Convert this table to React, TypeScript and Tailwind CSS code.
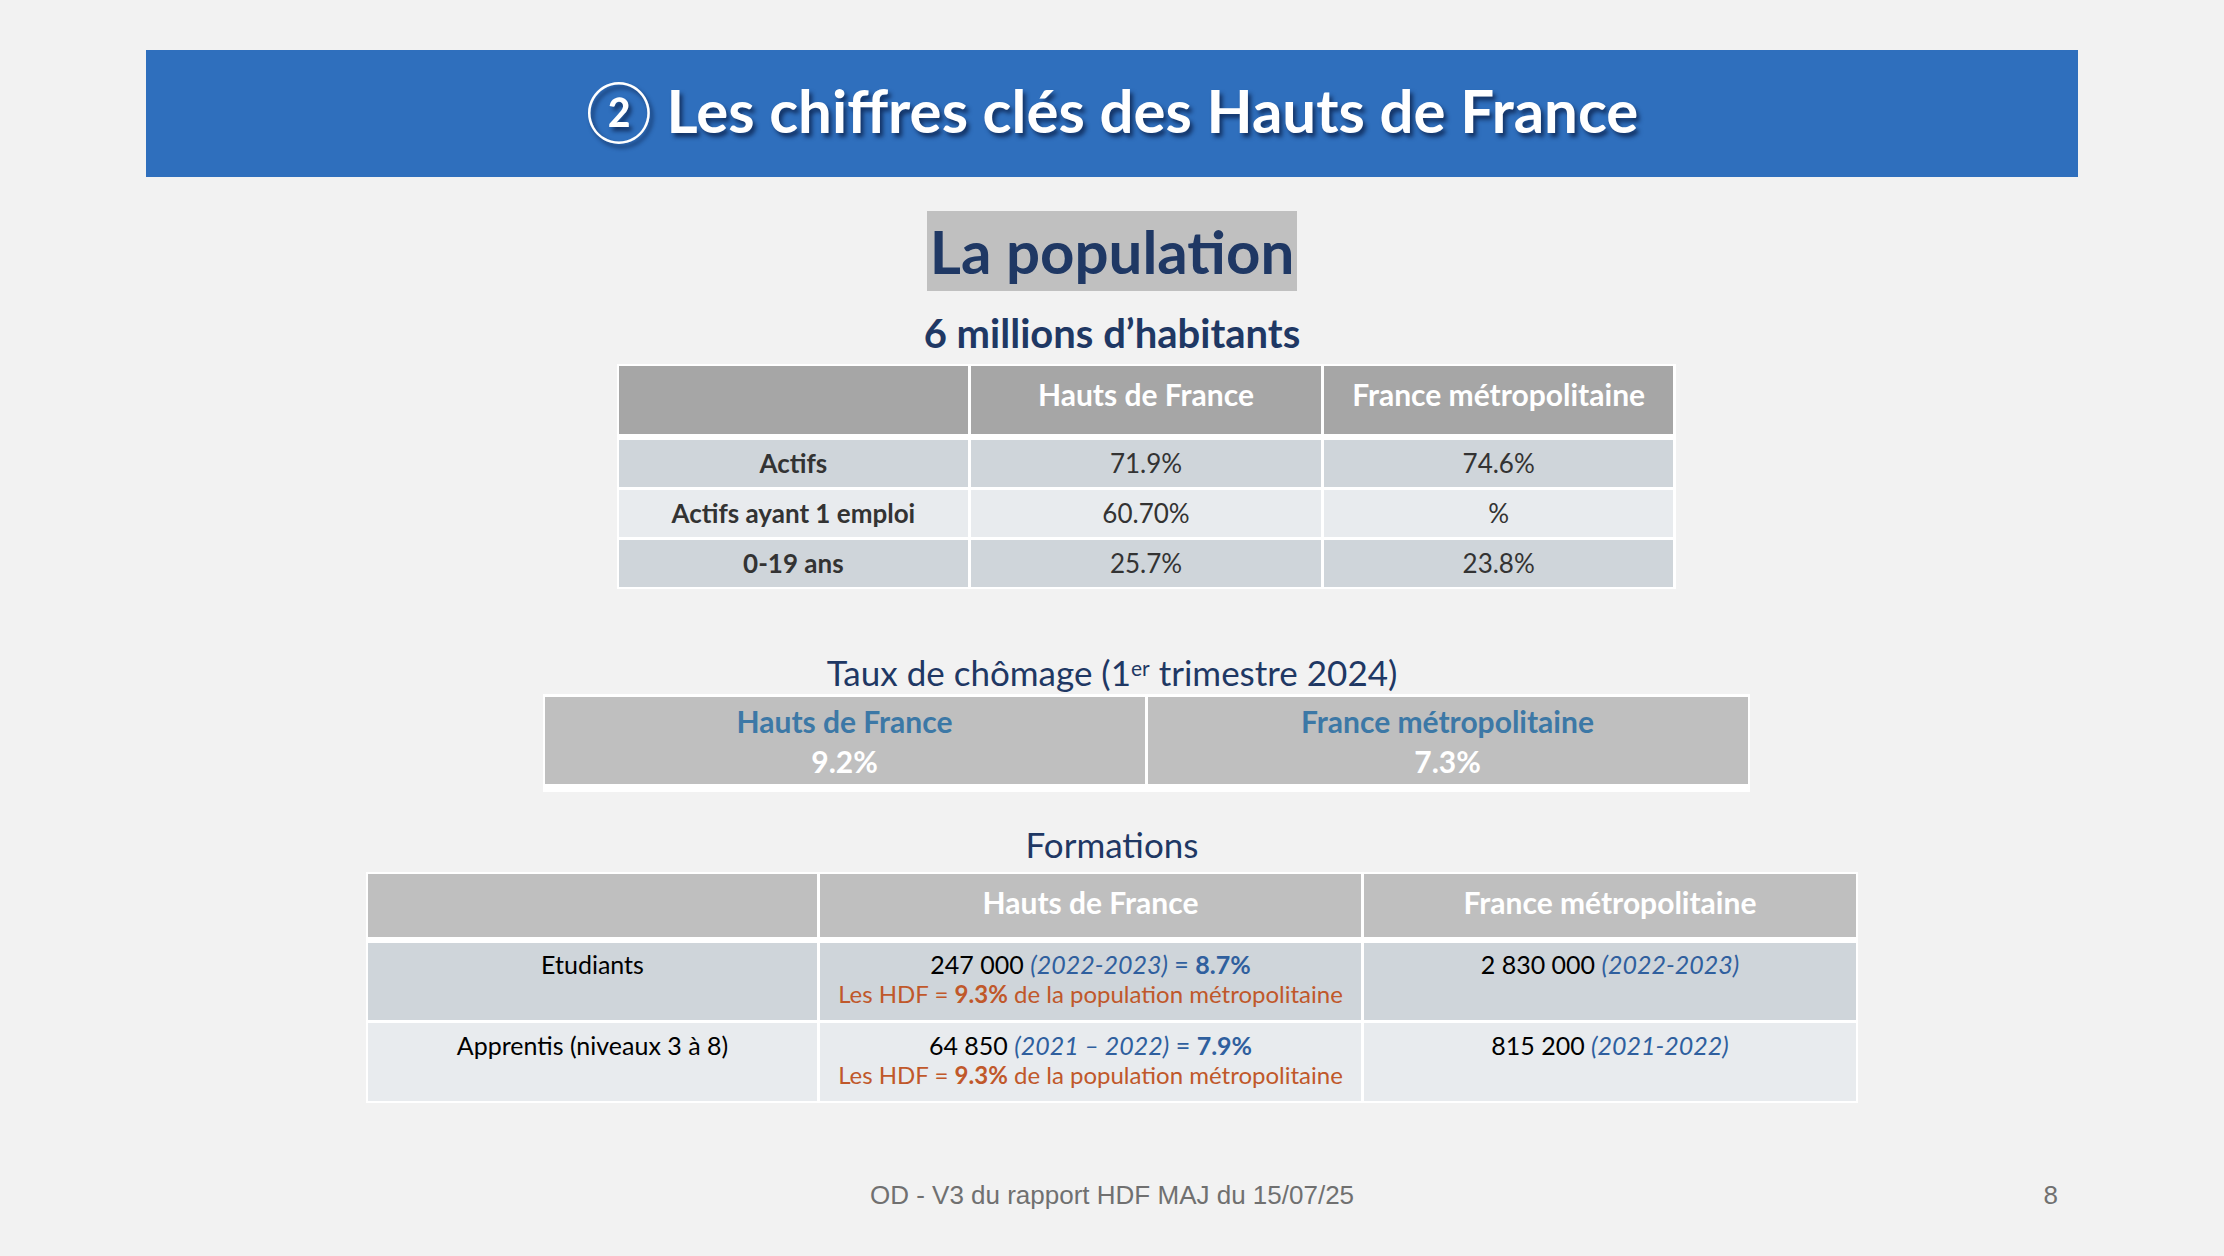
const font = { fontFamily: "Lato, 'Open Sans', sans-serif" }

const populationRows = [
  { label: "Actifs", hdf: "71.9%", fr: "74.6%" },
  { label: "Actifs ayant 1 emploi", hdf: "60.70%", fr: "%" },
  { label: "0-19 ans", hdf: "25.7%", fr: "23.8%" },
]

function PopulationTable() {
  return (
    <div className="w-[1059px] bg-white p-[2px] flex flex-col gap-[3px] text-[26px]">
      <div className="grid grid-cols-3 gap-[3px] h-[68px] mb-[3px] text-[30px]">
        <div className="bg-[#a6a6a6]" />
        <div className="bg-[#a6a6a6] text-white font-bold text-center pt-[6px]">Hauts de France</div>
        <div className="bg-[#a6a6a6] text-white font-bold text-center pt-[6px]">France métropolitaine</div>
      </div>
      {populationRows.map((row, i) => {
        const bg = i % 2 === 1 ? "bg-[#e8ebee]" : "bg-[#cfd5da]"
        return (
          <div key={row.label} className="grid grid-cols-3 gap-[3px] h-[47px] text-[#333333]">
            <div className={`${bg} flex items-center justify-center font-bold`}>{row.label}</div>
            <div className={`${bg} flex items-center justify-center`}>{row.hdf}</div>
            <div className={`${bg} flex items-center justify-center`}>{row.fr}</div>
          </div>
        )
      })}
    </div>
  )
}

function ChomageTable() {
  return (
    <div className="w-[1207px] bg-white px-[2px] pt-[3px] pb-[8px] text-[30px] font-bold">
      <div className="grid grid-cols-2 gap-[3px] h-[87px]">
        <div className="bg-[#bfbfbf] flex flex-col items-center justify-center leading-[40px]">
          <span className="text-[#3c78a6]">Hauts de France</span>
          <span className="text-white">9.2%</span>
        </div>
        <div className="bg-[#bfbfbf] flex flex-col items-center justify-center leading-[40px]">
          <span className="text-[#3c78a6]">France métropolitaine</span>
          <span className="text-white">7.3%</span>
        </div>
      </div>
    </div>
  )
}

function HdfNote() {
  return (
    <div className="text-[#c0582a] text-[24px]">
      Les HDF = <span className="font-bold">9.3%</span> de la population métropolitaine
    </div>
  )
}

function FormationsTable() {
  return (
    <div className="w-[1492px] bg-white p-[2px] flex flex-col gap-[3px] text-[25px] text-black">
      <div className="grid grid-cols-[449px_541px_1fr] gap-[3px] h-[63px] mb-[3px] text-[30px]">
        <div className="bg-[#bfbfbf]" />
        <div className="bg-[#bfbfbf] text-white font-bold text-center pt-[6px]">Hauts de France</div>
        <div className="bg-[#bfbfbf] text-white font-bold text-center pt-[6px]">France métropolitaine</div>
      </div>
      <div className="grid grid-cols-[449px_541px_1fr] gap-[3px] h-[77px] leading-[29px]">
        <div className="bg-[#cfd5da] text-center pt-[7px]">Etudiants</div>
        <div className="bg-[#cfd5da] text-center pt-[7px]">
          <div>
            247 000 <span className="italic text-[#2f5f9e]">(2022-2023)</span>{" "}
            <span className="text-[#2f5f9e]">=</span> <span className="font-bold text-[#2f5f9e]">8.7%</span>
          </div>
          <HdfNote />
        </div>
        <div className="bg-[#cfd5da] text-center pt-[7px]">
          2 830 000 <span className="italic text-[#2f5f9e]">(2022-2023)</span>
        </div>
      </div>
      <div className="grid grid-cols-[449px_541px_1fr] gap-[3px] h-[78px] leading-[29px]">
        <div className="bg-[#e8ebee] text-center pt-[8px]">Apprentis (niveaux 3 à 8)</div>
        <div className="bg-[#e8ebee] text-center pt-[8px]">
          <div>
            64 850 <span className="italic text-[#2f5f9e]">(2021 – 2022)</span>{" "}
            <span className="text-[#2f5f9e]">=</span> <span className="font-bold text-[#2f5f9e]">7.9%</span>
          </div>
          <HdfNote />
        </div>
        <div className="bg-[#e8ebee] text-center pt-[8px]">
          815 200 <span className="italic text-[#2f5f9e]">(2021-2022)</span>
        </div>
      </div>
    </div>
  )
}

export default function App() {
  return (
    <div className="w-[2224px] h-[1256px] bg-[#f2f2f2] flex flex-col items-center" style={font}>
      {/* Bandeau titre */}
      <div className="mt-[50px] w-[1932px] h-[127px] bg-[#2f6fbd] flex items-center justify-center pb-[8px]">
        <h1 className="text-[60px] font-bold text-white [text-shadow:3px_4px_4px_rgba(10,30,70,0.75)]">
          <span className="font-normal">②</span> Les chiffres clés des Hauts de France
        </h1>
      </div>

      <div className="mt-[34px] w-[370px] h-[80px] bg-[#c0c0c0] flex items-center justify-center">
        <span className="text-[60px] font-bold text-[#1f3864] leading-none">La population</span>
      </div>

      <div className="mt-[17px] text-[40px] font-bold text-[#1f3864] leading-[50px]">6 millions d’habitants</div>

      <div className="mt-[6px] ml-[68px]">
        <PopulationTable />
      </div>

      <div className="mt-[61px] text-[35px] text-[#1f3864] leading-[44px]">
        Taux de chômage (1<sup className="text-[21px]">er</sup> trimestre 2024)
      </div>
      <div className="ml-[68px]">
        <ChomageTable />
      </div>

      <div className="mt-[30px] text-[35px] text-[#1f3864] leading-[44px]">Formations</div>
      <div className="mt-[6px]">
        <FormationsTable />
      </div>

      <div
        className="mt-auto mb-[41px] w-[1932px] relative flex justify-center text-[26px] text-[#707070]"
        style={{ fontFamily: "'Liberation Sans', Arial, sans-serif" }}
      >
        <span>OD - V3 du rapport HDF MAJ du 15/07/25</span>
        <span className="absolute right-[20px]">8</span>
      </div>
    </div>
  )
}
